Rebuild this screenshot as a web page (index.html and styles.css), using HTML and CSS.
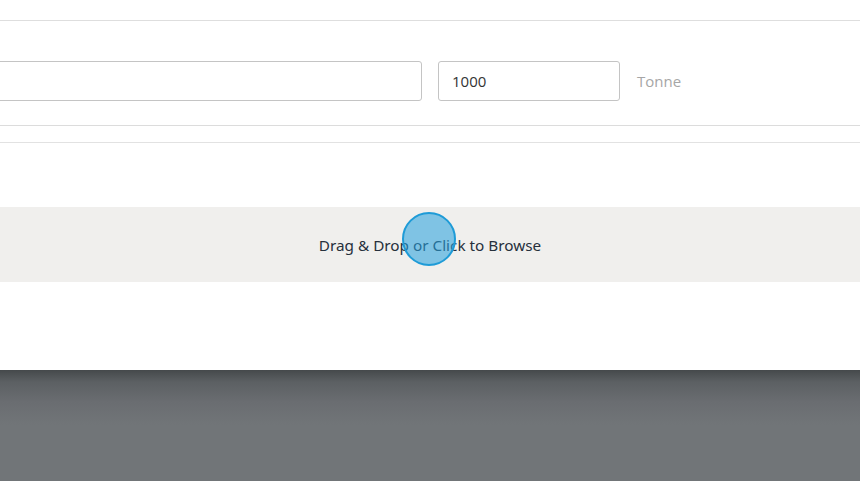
FILE: index.html
```html
<!DOCTYPE html>
<html lang="en">
<head>
   <meta charset="UTF-8"><title>Upload</title>
   <link rel="stylesheet" href="styles.css">
</head>
<body>

<section class="panel">
   <div class="head"></div>

   <div class="qty-row">
      <input class="field field-wide" type="text" value="">
      <input class="field field-qty" type="text" value="1000">
      <span class="unit">Tonne</span>
   </div>

   <div class="spacer"></div>

   <div class="drop">
      <span class="drop-label">Drag &amp; Drop or Click to Browse</span>
      <span class="cursor"></span>
   </div>
</section>

<section class="backdrop"></section>

</body>
</html>
```
FILE: styles.css
```css
body {
   margin: 0;
   font-family: "Open Sans", sans-serif;
   background: #fff;
   overflow: hidden;
}

.panel {
   background: #fff;
   height: 370px;
}

.head {
   height: 20px;
   border-bottom: 1px solid #dedede;
}

.qty-row {
   box-sizing: border-box;
   display: flex;
   align-items: center;
   height: 105px;
   padding-top: 40px;
   padding-bottom: 24px;
   border-bottom: 1px solid #dcdcdc;
}

.field {
   box-sizing: border-box;
   height: 40px;
   border: 1px solid #c4c4c4;
   border-radius: 3px;
   padding: 0 13px;
   font-family: "Open Sans", sans-serif;
   font-size: 15px;
   color: #333;
   background: #fff;
}

.field-wide {
   width: 442px;
   margin-left: -20px;
}

.field-qty {
   width: 182px;
   margin-left: 16px;
}

.unit {
   margin-left: 17px;
   font-size: 15px;
   color: #a6a6a6;
}

.spacer {
   height: 16px;
   border-bottom: 1px solid #e2e2e2;
}

.drop {
   position: relative;
   margin-top: 64px;
   height: 75px;
   background: #f0efed;
   display: flex;
   align-items: center;
   justify-content: center;
}

.drop-label {
   font-family: "Noto Sans", sans-serif;
   font-size: 15.3px;
   color: #26303c;
   margin-top: 1px;
}

.cursor {
   position: absolute;
   left: 402px;
   top: 5px;
   width: 50px;
   height: 50px;
   border: 2px solid #1e9bd7;
   border-radius: 50%;
   background: rgba(40, 160, 222, 0.56);
}

.backdrop {
   height: 111px;
   background: linear-gradient(#45494b 0, #5c6063 12px, #6a6d71 32px, #717578 55px, #717578 100%);
}
```
